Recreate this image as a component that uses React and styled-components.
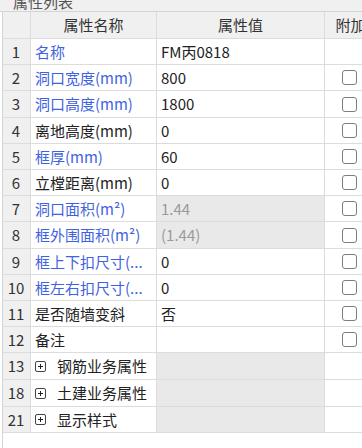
import React from "react";
import styled, { createGlobalStyle } from "styled-components";

const GlobalStyle = createGlobalStyle`
  html, body { margin: 0; padding: 0; background: #ffffff; }
  body {
    font-family: "Noto Sans CJK SC", "Noto Sans", sans-serif;
    overflow: hidden;
  }
`;

const COLS = "28px 126px 168px 52px";
const LINE = "#dcdcdc";

const Panel = styled.div`
  width: 362px;
  height: 448px;
  overflow: hidden;
  background: #ffffff;
  display: flex;
  flex-direction: column;
`;

const TitleBar = styled.div`
  height: 11px;
  flex: none;
  display: flex;
  align-items: flex-end;
  overflow: hidden;
  background: #f0f0f0;
  border-bottom: 1px solid #d4d4d4;
  padding-left: 13px;
`;

const TitleText = styled.span`
  font-size: 15px;
  line-height: 20px;
  color: #555555;
  white-space: nowrap;
  margin-bottom: -1px;
`;

const Body = styled.div`
  flex: 1;
  margin-left: 2px;
  border-left: 1px solid #d4d4d4;
  width: 380px;
`;

const Row = styled.div`
  display: grid;
  grid-template-columns: ${COLS};
  height: ${(p) => p.$h}px;
`;

const Cell = styled.div`
  box-sizing: border-box;
  border-right: 1px solid ${LINE};
  border-bottom: 1px solid ${LINE};
  display: flex;
  align-items: center;
  overflow: hidden;
  white-space: nowrap;
  font-size: 15px;
  line-height: 20px;
  padding: 0 4px;
  background: ${(p) => (p.$gray ? "#e9e9e9" : "#ffffff")};
  color: ${(p) => (p.$muted ? "#9a9a9a" : p.$blue ? "#3f63e0" : "#222222")};
`;

const HeadCell = styled(Cell)`
  background: #f0f0f0;
  color: #333333;
  justify-content: center;
  padding: 0;
`;

const NumCell = styled(Cell)`
  background: #f0f0f0;
  color: #333333;
  justify-content: center;
  padding: 0 1px 0 0;
`;

const CheckCell = styled(Cell)`
  justify-content: center;
  padding: 0 3px 0 0;
`;

const Check = styled.span`
  box-sizing: border-box;
  width: 15px;
  height: 15px;
  border: 1px solid #7d7d7d;
  border-radius: 3px;
  background: #ffffff;
`;

const GroupLabel = styled.span`
  margin-left: 11px;
  color: #222222;
`;

const ExpandIcon = () => (
  <svg width="11" height="11" viewBox="0 0 11 11" style={{ flex: "none" }}>
    <rect x="0.5" y="0.5" width="10" height="10" rx="1.5" fill="#fff" stroke="#444" strokeWidth="1" />
    <path d="M3 5.5h5M5.5 3v5" stroke="#222" strokeWidth="1" />
  </svg>
);

const rows = [
  { n: 1, name: "名称", blue: true, value: "FM丙0818", check: false, h: 26 },
  { n: 2, name: "洞口宽度(mm)", blue: true, value: "800", check: true, h: 26 },
  { n: 3, name: "洞口高度(mm)", blue: true, value: "1800", check: true, h: 27 },
  { n: 4, name: "离地高度(mm)", value: "0", check: true, h: 26 },
  { n: 5, name: "框厚(mm)", blue: true, value: "60", check: true, h: 26 },
  { n: 6, name: "立樘距离(mm)", value: "0", check: true, h: 26 },
  { n: 7, name: "洞口面积(m²)", blue: true, value: "1.44", gray: true, check: true, h: 26 },
  { n: 8, name: "框外围面积(m²)", blue: true, value: "(1.44)", gray: true, check: true, h: 27 },
  { n: 9, name: "框上下扣尺寸(...", blue: true, value: "0", check: true, h: 26 },
  { n: 10, name: "框左右扣尺寸(...", blue: true, value: "0", check: true, h: 26 },
  { n: 11, name: "是否随墙变斜", value: "否", check: true, h: 26 },
  { n: 12, name: "备注", value: "", check: true, h: 26 },
  { n: 13, name: "钢筋业务属性", group: true, h: 27 },
  { n: 18, name: "土建业务属性", group: true, h: 27 },
  { n: 21, name: "显示样式", group: true, h: 26 },
];

export default function App() {
  return (
    <>
      <GlobalStyle />
      <Panel>
        <TitleBar>
          <TitleText>属性列表</TitleText>
        </TitleBar>
        <Body>
          <Row $h={27}>
            <HeadCell />
            <HeadCell>属性名称</HeadCell>
            <HeadCell>属性值</HeadCell>
            <HeadCell>附加</HeadCell>
          </Row>
          {rows.map((r) => (
            <Row key={r.n} $h={r.h}>
              <NumCell>{r.n}</NumCell>
              {r.group ? (
                <Cell>
                  <ExpandIcon />
                  <GroupLabel>{r.name}</GroupLabel>
                </Cell>
              ) : (
                <Cell $blue={r.blue}>{r.name}</Cell>
              )}
              {r.group ? (
                <Cell $gray />
              ) : (
                <Cell $gray={r.gray} $muted={r.gray}>
                  {r.value}
                </Cell>
              )}
              <CheckCell>{r.check && <Check />}</CheckCell>
            </Row>
          ))}
        </Body>
      </Panel>
    </>
  );
}
